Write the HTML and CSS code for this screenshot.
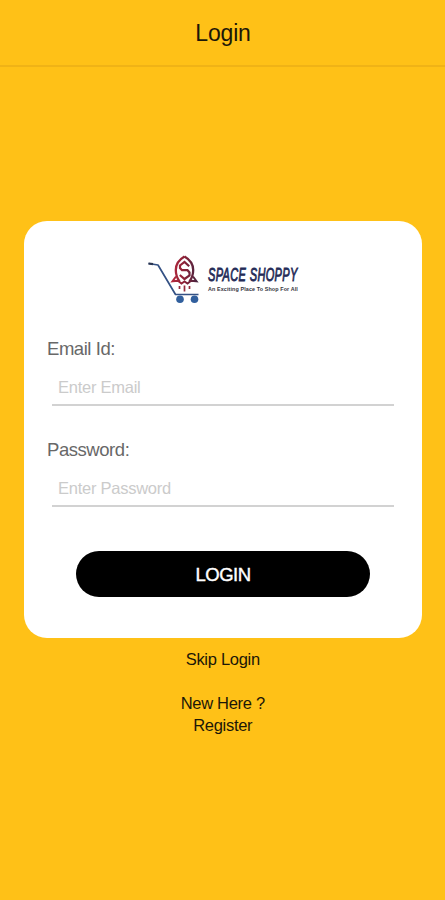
FILE: index.html
```
<!DOCTYPE html>
<html lang="en">
<head>
  <meta charset="UTF-8">
  <meta name="viewport" content="width=device-width, initial-scale=1.0">
  <title>Login</title>
  <link rel="stylesheet" href="styles.css">
</head>
<body>

<header class="header">
  <h1>Login</h1>
</header>

<main>
  <form class="card">
    <svg class="logo" width="170" height="54" viewBox="0 0 170 54" role="img" aria-label="Space Shoppy">
      <defs>
        <linearGradient id="rocket" gradientUnits="userSpaceOnUse" x1="27" y1="0" x2="52" y2="0">
          <stop offset="0" stop-color="#b5283c"/>
          <stop offset="0.5" stop-color="#8a2238"/>
          <stop offset="1" stop-color="#4a2540"/>
        </linearGradient>
      </defs>

      <!-- cart -->
      <path d="M3.5 11.5 L13 13 L30.5 42.5 H53.5" fill="none" stroke="#345184" stroke-width="1.7" stroke-linejoin="round"/>
      <path d="M3.5 11.5 L8 12.2" stroke="#2b3652" stroke-width="2.2"/>
      <circle cx="35" cy="47.2" r="3.8" fill="#315f9d"/>
      <circle cx="49.5" cy="47.2" r="3.8" fill="#315f9d"/>

      <!-- rocket -->
      <g fill="none" stroke="url(#rocket)">
        <path d="M39.5 4.5 C33.5 8 30.8 13 30.8 18 C30.8 22.5 32 26 34.5 29.5 M39.5 4.5 C45.5 8 48.2 13 48.2 18 C48.2 22.5 47 26 44.5 29.5" stroke-width="2.3"/>
        <path d="M31 24.5 L27.5 29.2 L33 28.7 L36.5 31.5 L39.5 29.5 L42.5 31.5 L46 28.7 L51.5 29.2 L48 24.5" stroke-width="2"/>
        <path d="M44.2 14.3 L39.5 10 L35 13.5 V16 L37 18.2 H42.5 L44.5 20.5 V23.5 L39.5 27 L34.8 23" stroke-width="2.2"/>
      </g>
      <path d="M34.5 34 V37 M39.5 33.5 V39.5 M44.5 34 V37" stroke="#942a3b" stroke-width="1.7"/>

      <text class="logo-name" transform="translate(63 29) scale(0.595 1)">SPACE SHOPPY</text>
      <text class="logo-tagline" x="63" y="38.7">An Exciting Place To Shop For All</text>
    </svg>

    <div class="field">
      <label for="email">Email Id:</label>
      <input id="email" type="email" name="email" placeholder="Enter Email">
    </div>

    <div class="field">
      <label for="password">Password:</label>
      <input id="password" type="password" name="password" placeholder="Enter Password">
    </div>

    <button class="btn" type="button">LOGIN</button>
  </form>

  <nav class="links">
    <a class="skip" href="#">Skip Login</a>
    <span>New Here ?</span>
    <a href="#">Register</a>
  </nav>
</main>

</body>
</html>
```

FILE: styles.css
```
* {
  box-sizing: border-box;
}

body {
  margin: 0;
  min-height: 100vh;
  font-family: "Liberation Sans", Arial, sans-serif;
  background-color: #ffc117;
}

.header {
  height: 67px;
  padding: 2px 0 0 1px;
  display: flex;
  justify-content: center;
  align-items: center;
  border-bottom: 2px solid #f0b316;
}

.header h1 {
  margin: 0;
  font-size: 23px;
  font-weight: normal;
  letter-spacing: -0.2px;
  color: #1c1708;
}

main {
  padding: 154px 23px 0 23.5px;
}

.card {
  height: 417px;
  padding: 31px 28px 0 23.5px;
  display: flex;
  flex-direction: column;
  background-color: #fff;
  border-radius: 23px;
}

.logo {
  flex: none;
  margin-left: 98px;
}

.logo-name {
  font-size: 18.5px;
  font-style: italic;
  letter-spacing: 0.6px;
  fill: #242b57;
  stroke: #242b57;
  stroke-width: 0.9px;
}

.logo-tagline {
  font-size: 5.4px;
  font-weight: bold;
  letter-spacing: 0.11px;
  fill: #34343c;
}

.field {
  height: 101px;
  padding-top: 32px;
  display: flex;
  flex-direction: column;
}

.field label {
  font-size: 18.5px;
  line-height: 22px;
  letter-spacing: -0.45px;
  color: #686868;
}

.field input {
  height: 47px;
  margin: -1px 0 0 5px;
  padding: 12px 6px 0;
  font-family: inherit;
  font-size: 16.5px;
  letter-spacing: -0.25px;
  color: #686868;
  background: none;
  border: none;
  border-bottom: 2px solid #d2d2d2;
  outline: none;
}

.field input::placeholder {
  color: #cbcbcb;
}

.btn {
  width: 294px;
  height: 46px;
  margin: 43px 0 0 29px;
  padding-top: 2px;
  font-family: inherit;
  font-size: 18.5px;
  letter-spacing: -0.5px;
  color: #fff;
  -webkit-text-stroke: 0.4px #fff;
  background-color: #000;
  border: none;
  border-radius: 23px;
  cursor: pointer;
}

.links {
  padding-top: 10px;
  display: flex;
  flex-direction: column;
  align-items: center;
  font-size: 16.5px;
  line-height: 22px;
  letter-spacing: -0.3px;
  color: #1c1708;
}

.links a {
  color: inherit;
  text-decoration: none;
}

.links .skip {
  margin-bottom: 22px;
}
```
